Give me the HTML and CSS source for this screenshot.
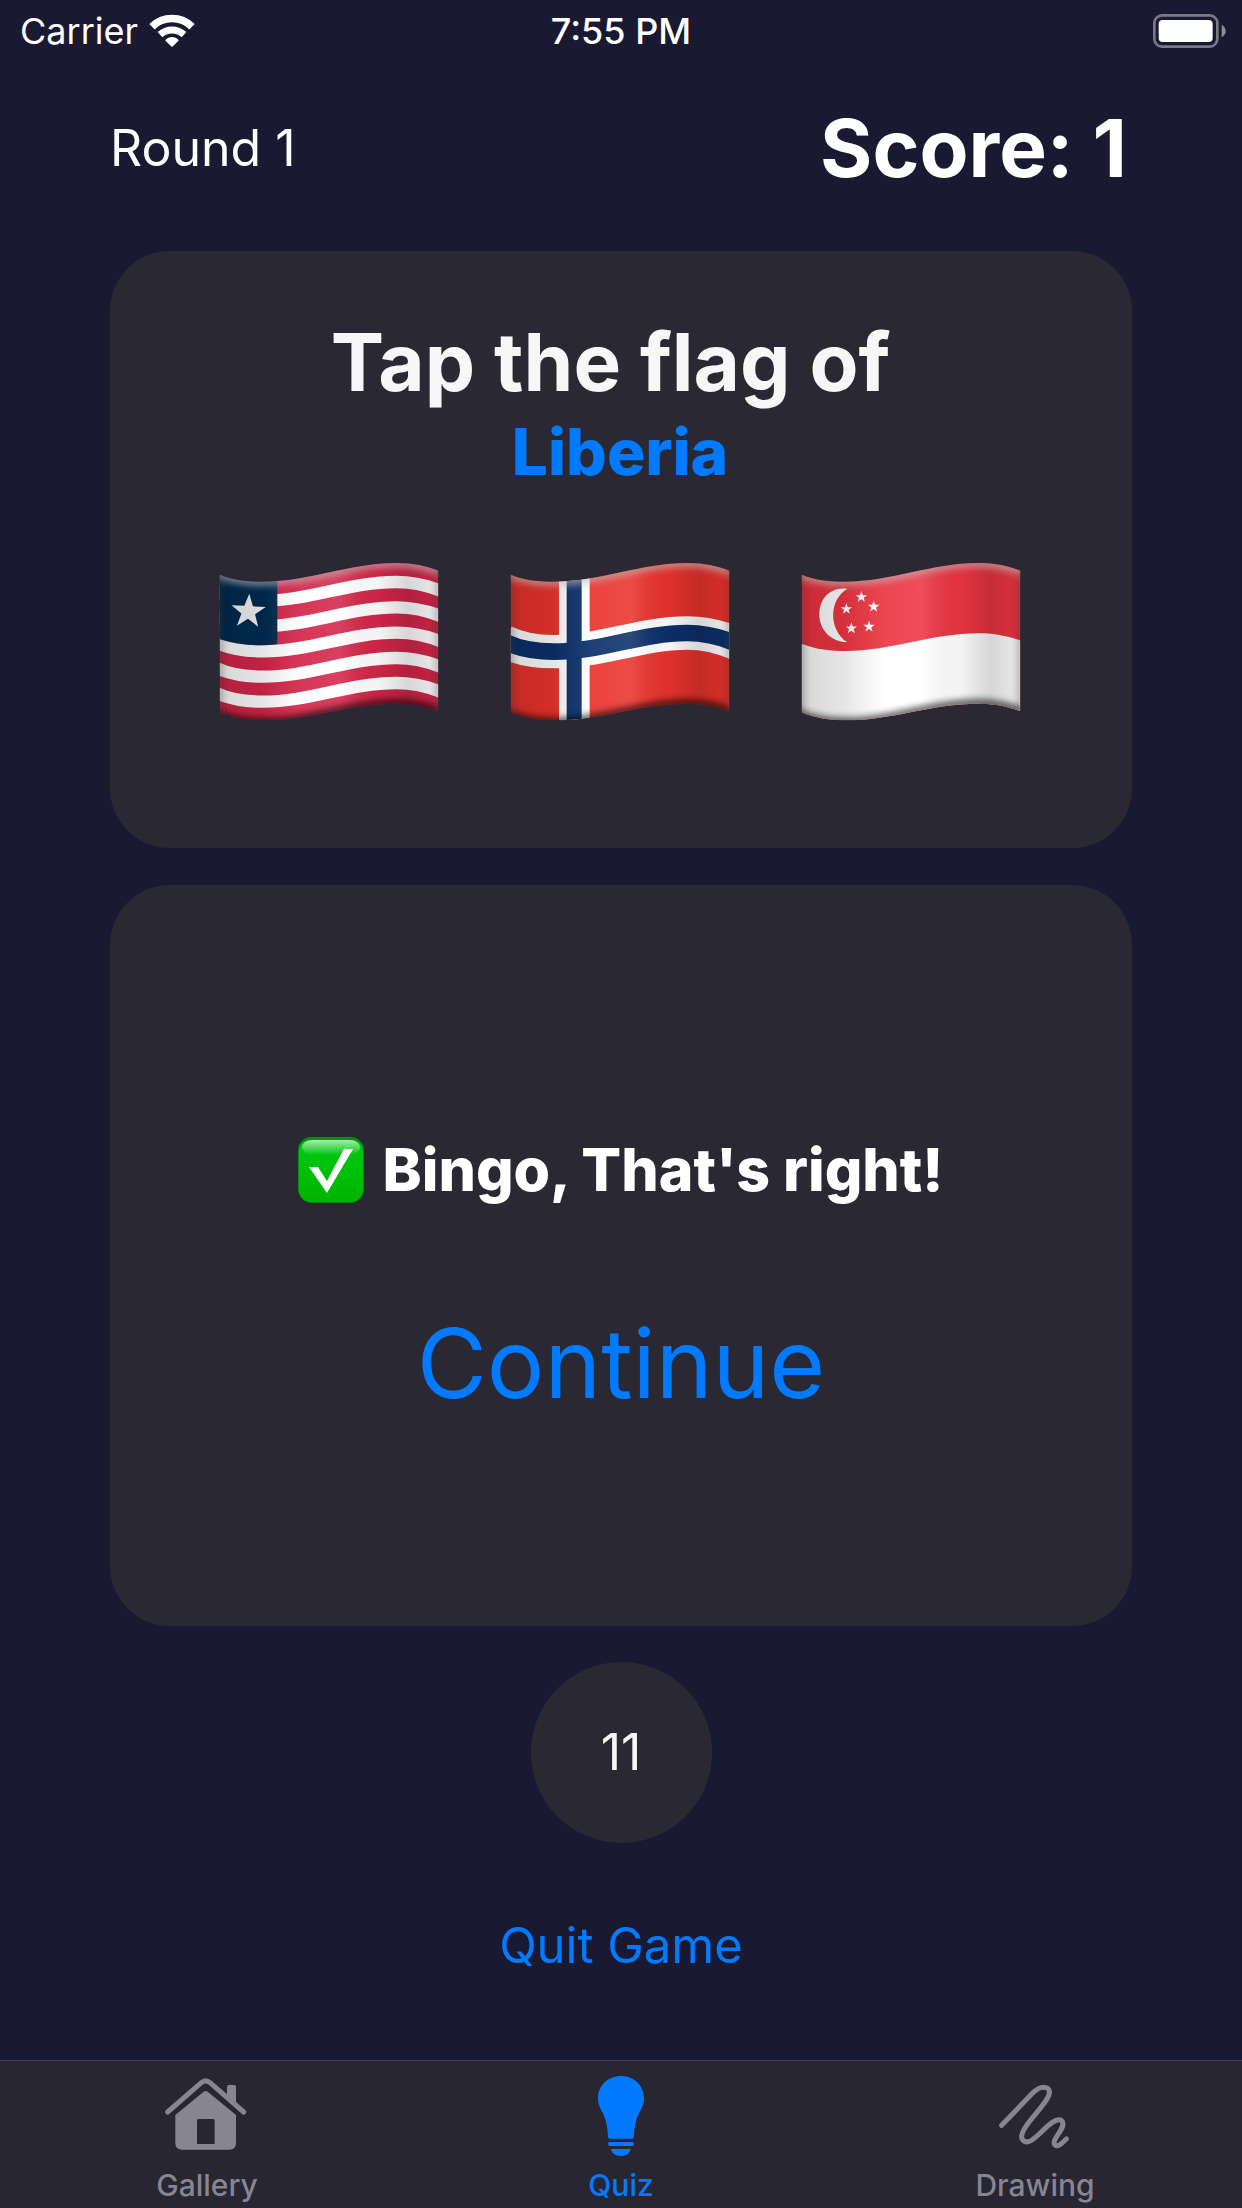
FILE: index.html
```html
<!DOCTYPE html>
<html lang="en">
<head>
<meta charset="utf-8">
<meta name="viewport" content="width=device-width, initial-scale=1">
<title>Flag Quiz</title>
<link rel="stylesheet" href="styles.css">
</head>
<body>
<svg class="defs" width="0" height="0" aria-hidden="true">
  <defs>
    <path id="wave" d="M40 92 C90 118 145 123 190 123 C330 123 450 67 590 67 C640 67 685 76 740 100"/>
    <clipPath id="cloth"><path d="M60 102 C100 119 145 123 190 123 C330 123 450 67 590 67 C640 67 680 76 716 90 V512 C680 498 640 489 590 489 C450 489 330 539 190 539 C145 539 100 532 60 515 Z"/></clipPath>
    <linearGradient id="folds">
      <stop offset="0" stop-color="#000" stop-opacity=".16"/>
      <stop offset=".2" stop-color="#000" stop-opacity=".1"/>
      <stop offset=".38" stop-color="#fff" stop-opacity=".08"/>
      <stop offset=".55" stop-color="#fff" stop-opacity=".12"/>
      <stop offset=".72" stop-color="#000" stop-opacity=".04"/>
      <stop offset=".86" stop-color="#000" stop-opacity=".16"/>
      <stop offset="1" stop-color="#000" stop-opacity=".08"/>
    </linearGradient>
    <filter id="soft" x="-20%" y="-50%" width="140%" height="200%"><feGaussianBlur stdDeviation="9"/></filter>
    <g id="shade">
      <rect x="58" y="60" width="660" height="485" fill="url(#folds)"/>
      <g fill="none" filter="url(#soft)">
        <use href="#wave" stroke="#bbb" stroke-width="26" stroke-opacity=".6"/>
        <use href="#wave" y="420" stroke="#000" stroke-width="26" stroke-opacity=".6"/>
        <path d="M60 95V525M716 85V520" stroke="#333" stroke-width="12" stroke-opacity=".5"/>
      </g>
    </g>
    <path id="star" d="M0-10 2.4-3.1 9.5-3.1 3.8 1.2 5.9 8.1 0 3.9-5.9 8.1-3.8 1.2-9.5-3.1-2.4-3.1Z"/>
  </defs>
</svg>

<header class="status">
  <div class="carrier">Carrier
    <svg width="48" height="36" viewBox="444 36 144 108" aria-hidden="true">
      <g fill="none" stroke="#fff"><path stroke-width="23" d="M456 77A86 86 0 0 1 576 77"/><path stroke-width="21" d="M480 101A53 53 0 0 1 552 101"/></g>
      <path fill="#fff" d="M516 138 497 120Q495 118 498 115Q516 101 534 115Q537 118 535 120Z"/>
    </svg>
  </div>
  <time>7:55 PM</time>
  <svg class="battery" width="74" height="36" viewBox="1000 36 222 108" aria-hidden="true">
    <rect x="1004" y="43" width="189" height="94" rx="23" fill="none" stroke="#7a7989" stroke-width="8"/>
    <rect x="1017" y="57" width="162" height="66" rx="12" fill="#fff"/>
    <path d="M1206 71Q1218 78 1218 90T1206 109Z" fill="#8c8b98"/>
  </svg>
</header>

<main class="game">
  <div class="scoreline">
    <span class="round">Round 1</span>
    <span class="score">Score: 1</span>
  </div>

  <section class="card question">
    <h1>Tap the flag of&nbsp;</h1>
    <h2>Liberia</h2>
    <div class="flags">
      <button type="button" class="flag" aria-label="Striped flag with one star">
        <svg viewBox="58 64 660 477"><g clip-path="url(#cloth)">
          <rect x="50" y="50" width="680" height="500" fill="#d42649"/>
          <g fill="none" stroke="#fff" stroke-width="37">
            <use href="#wave" y="57"/><use href="#wave" y="133"/><use href="#wave" y="209"/><use href="#wave" y="285"/><use href="#wave" y="360"/>
          </g>
          <path fill="#002b52" d="M50 85H233V310Q140 323 50 292Z"/>
          <use href="#star" transform="translate(146 213) rotate(3) scale(5.4)" fill="#f4f4f4"/>
          <use href="#shade"/>
        </g></svg>
      </button>
      <button type="button" class="flag" aria-label="Red flag with a blue cross">
        <svg viewBox="58 64 660 477"><g clip-path="url(#cloth)">
          <rect x="50" y="50" width="680" height="500" fill="#ea332d"/>
          <path d="M205 50H297V550H205Z" fill="#fff"/>
          <use href="#wave" y="210" fill="none" stroke="#fff" stroke-width="100"/>
          <path d="M228 50H273V550H228Z" fill="#0c306b"/>
          <use href="#wave" y="210" fill="none" stroke="#0c306b" stroke-width="50"/>
          <use href="#shade"/>
        </g></svg>
      </button>
      <button type="button" class="flag" aria-label="Red and white flag with a crescent">
        <svg viewBox="58 64 660 477"><g clip-path="url(#cloth)">
          <rect x="50" y="50" width="680" height="500" fill="#ec3543"/>
          <path d="M40 300 C90 326 145 331 190 331 C330 331 450 278 590 278 C640 278 685 287 740 308 V560 H40 Z" fill="#fff"/>
          <g fill="#fff">
            <path d="M197 144C90 131 80 298 197 305C138 265 143 175 197 144Z"/>
            <use href="#star" transform="translate(239 169) scale(1.8)"/>
            <use href="#star" transform="translate(276 198) scale(1.8)"/>
            <use href="#star" transform="translate(194 205) scale(1.8)"/>
            <use href="#star" transform="translate(209 263) scale(1.8)"/>
            <use href="#star" transform="translate(262 258) scale(1.8)"/>
          </g>
          <use href="#shade"/>
        </g></svg>
      </button>
    </div>
  </section>

  <section class="card result">
    <p class="verdict">
      <svg width="66" height="66" viewBox="0 0 66 66" aria-hidden="true">
        <defs>
          <linearGradient id="tile" x2="0" y2="1"><stop stop-color="#00cb14"/><stop offset="1" stop-color="#00b400"/></linearGradient>
          <linearGradient id="gloss" x2="0" y2="1"><stop stop-color="#fff" stop-opacity=".65"/><stop offset="1" stop-color="#fff" stop-opacity="0"/></linearGradient>
        </defs>
        <rect width="66" height="66" rx="14" fill="#078c16"/>
        <rect x="1" y="2" width="64" height="63" rx="13" fill="url(#tile)"/>
        <path d="M0 14A14 14 0 0 1 14 0H52A14 14 0 0 1 66 14Q64 3 52 3H14Q2 3 0 14Z" fill="#078c16"/>
        <rect x="4" y="3" width="58" height="15" rx="10" fill="url(#gloss)"/>
        <path d="M11 30H20L29 44 46 12H55L29 56Z" fill="#fff"/>
      </svg>
      Bingo, That's right!
    </p>
    <button type="button" class="continue">Continue</button>
  </section>

  <div class="timer">11</div>
  <button type="button" class="quit">Quit Game</button>
</main>

<nav class="tabs">
  <a href="#gallery">
    <svg width="90" height="80" viewBox="126 78 270 240" aria-hidden="true">
      <path d="M143 186 244 98Q257 87 270 98L371 186" fill="none" stroke="currentColor" stroke-width="15" stroke-linecap="round"/>
      <path fill="currentColor" d="M321 136V111Q321 105 327 105H342Q348 105 348 111V162ZM166 195 250 126Q257 120 264 126L348 195V279Q348 299 328 299H186Q166 299 166 279ZM236 207Q231 207 231 212V282H284V212Q284 207 279 207Z" fill-rule="evenodd"/>
    </svg>
    Gallery
  </a>
  <a href="#quiz" class="active" aria-current="page">
    <svg width="90" height="80" viewBox="108 78 270 240" aria-hidden="true">
      <path fill="currentColor" d="M243 78C283 78 312 107 312 145C312 183 284 186 282 260Q282 266 276 266H210Q204 266 204 260C202 186 174 183 174 145C174 107 203 78 243 78ZM210 276H276Q282 276 282 282T276 288H210Q204 288 204 282T210 276ZM213 297H272C270 311 258 318 243 318S215 311 213 297Z"/>
    </svg>
    Quiz
  </a>
  <a href="#drawing">
    <svg width="90" height="80" viewBox="120 78 270 240" aria-hidden="true">
      <path fill="none" stroke="currentColor" stroke-width="15" stroke-linecap="round" d="M155 226 247 130C273 104 288 112 294 116C324 142 198 233 217 268C243 306 300 194 334 211C356 230 299 270 315 285C325 293 335 280 349 267"/>
    </svg>
    Drawing
  </a>
</nav>
</body>
</html>
```
FILE: styles.css
```css
* { box-sizing: border-box; }

body {
  margin: 0;
  min-height: 100vh;
  display: flex;
  flex-direction: column;
  background: #1a1932;
  color: #fff;
  font-family: Inter, "Liberation Sans", sans-serif;
}

svg { display: block; }
.defs { position: absolute; }
h1, h2, p { margin: 0; }

button {
  padding: 0;
  border: 0;
  background: none;
  color: #007aff;
  font-family: inherit;
  cursor: pointer;
}

.status {
  display: grid;
  grid-template-columns: 1fr auto 1fr;
  align-items: center;
  height: 62px;
  padding: 0 15px;
  font-size: 36px;
}
.carrier { display: flex; align-items: center; gap: 10px; padding-left: 5px; }
.status time { font-weight: 500; }
.battery { justify-self: end; }

.game {
  flex: 1;
  display: flex;
  flex-direction: column;
  align-items: center;
  padding: 36px 110px 84px;
}

.scoreline {
  align-self: stretch;
  display: flex;
  justify-content: space-between;
  align-items: center;
  margin-bottom: 53px;
  line-height: 100px;
}
.round { font-size: 50px; }
.score { padding-right: 5px; font-size: 80px; font-weight: 700; }

.card {
  align-self: stretch;
  border-radius: 60px;
  background: #2a2933;
  text-align: center;
}
.question { padding: 61px 111px 127px 109px; }
.question h1 { color: #f7f7f7; font-size: 80px; font-weight: 700; line-height: 100px; }
.question h2 { color: #007aff; font-size: 64px; font-weight: 800; line-height: 80px; }

.flags { display: flex; justify-content: space-between; margin-top: 70px; }
.flag { width: 220px; }

.result {
  flex: 1;
  display: flex;
  flex-direction: column;
  align-items: center;
  justify-content: center;
  gap: 93px;
  margin: 37px 0 36px;
  padding-top: 42px;
}
.verdict {
  display: flex;
  align-items: center;
  gap: 18px;
  font-size: 59px;
  font-weight: 800;
  line-height: 80px;
}
.continue { font-size: 96px; line-height: 120px; }

.timer {
  width: 181px;
  border-radius: 50%;
  background: #2a2933;
  color: #f7f7f7;
  font-size: 50px;
  line-height: 181px;
  text-align: center;
}
.quit { margin-top: 73px; font-size: 49px; line-height: 60px; }

.tabs {
  display: grid;
  grid-template-columns: repeat(3, 1fr);
  border-top: 1px solid #3d3b51;
  background: #272632;
}
.tabs a {
  display: flex;
  flex-direction: column;
  align-items: center;
  gap: 11px;
  padding: 15px 0 5px;
  color: #868591;
  font-size: 30px;
  font-weight: 500;
  line-height: 36px;
  text-decoration: none;
}
.tabs .active { color: #007aff; }
```
